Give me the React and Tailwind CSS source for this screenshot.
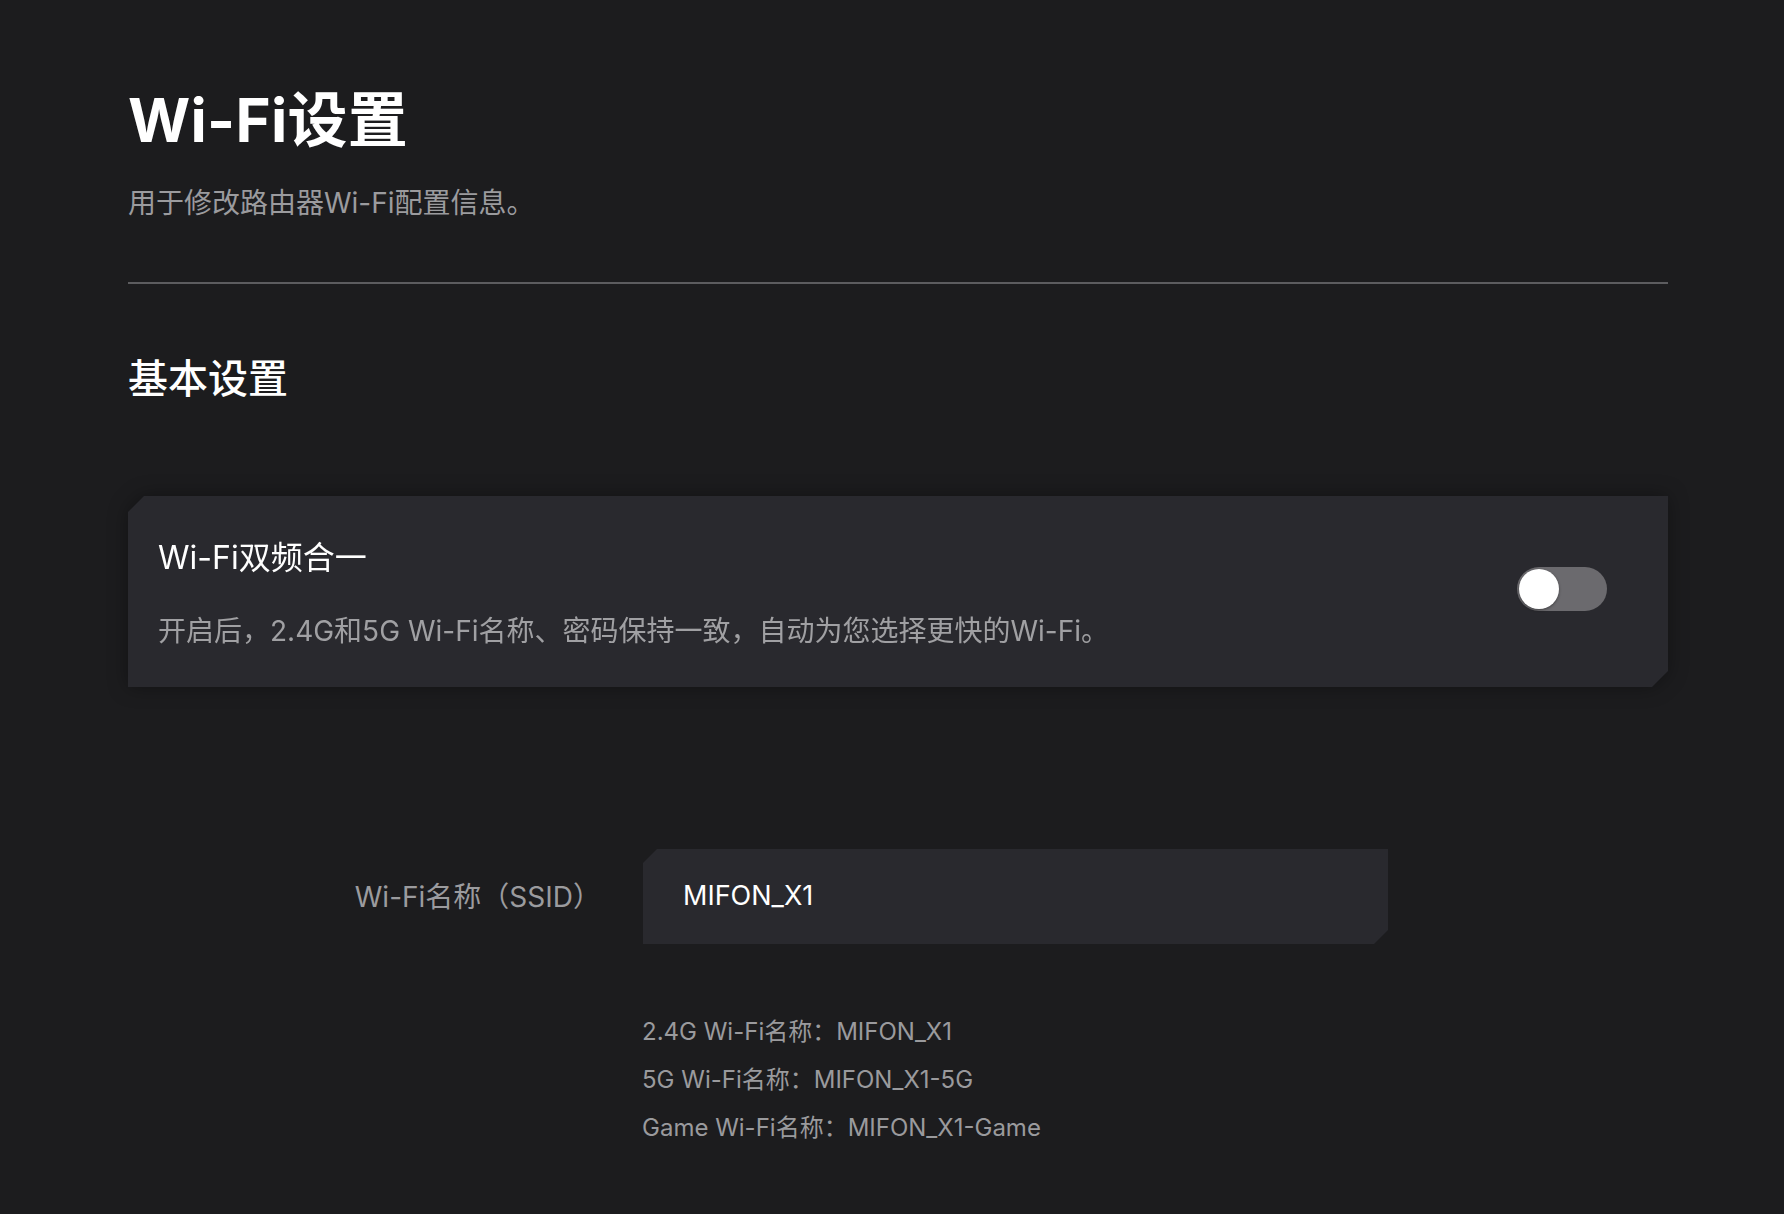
import React from "react";

export default function App() {
  const font = { fontFamily: '"Inter", "Noto Sans CJK SC", sans-serif' };
  return (
    <div className="min-h-[1214px] w-full bg-[#1c1c1e]" style={font}>
      <div className="ml-[128px] w-[1540px] pt-[90px] pb-[60px]">
        <h1 className="text-[60px] leading-none font-bold text-white tracking-[0.3px]">
          Wi-Fi设置
        </h1>
        <p className="mt-[39px] text-[28px] leading-[28px] text-[#9b9b9e]">
          用于修改路由器Wi-Fi配置信息。
        </p>
        <div className="mt-[65px] h-[2px] w-full bg-[#5c5c5f]" />

        <h2 className="mt-[75px] text-[40px] leading-[40px] font-medium text-white">
          基本设置
        </h2>

        <div className="mt-[97px] drop-shadow-[0_0_10px_rgba(0,0,0,0.35)]">
          <div className="flex h-[191px] items-center justify-between bg-[#29292e] pl-[30px] pr-[61px] [clip-path:polygon(16px_0,100%_0,100%_calc(100%_-_16px),calc(100%_-_16px)_100%,0_100%,0_16px)]">
            <div className="flex flex-col pt-[3px]">
              <div className="text-[32px] leading-[32px] text-white">Wi-Fi双频合一</div>
              <div className="mt-[43px] text-[28px] leading-[28px] text-[#a0a0a3]">
                开启后，2.4G和5G Wi-Fi名称、密码保持一致，自动为您选择更快的Wi-Fi。
              </div>
            </div>
            <button
              type="button"
              className="mb-[5px] flex h-[44px] w-[90px] items-center rounded-full bg-[#6b6a6e] p-[2px]"
            >
              <span className="h-[40px] w-[40px] rounded-full bg-white shadow-[0_1px_3px_rgba(0,0,0,0.4)]" />
            </button>
          </div>
        </div>

        <div className="mt-[162px] flex items-center">
          <div className="w-[515px] pr-[42px] text-right text-[28px] leading-[28px] text-[#9b9b9e]">
            Wi-Fi名称（SSID）
          </div>
          <div className="flex h-[95px] w-[745px] items-center bg-[#29292e] pl-[40px] text-[27px] text-white [clip-path:polygon(14px_0,100%_0,100%_calc(100%_-_14px),calc(100%_-_14px)_100%,0_100%,0_14px)]">
            MIFON_X1
          </div>
        </div>

        <div className="mt-[64px] ml-[514px] flex flex-col text-[24px] leading-[48px] text-[#9a9a9d]">
          <div>2.4G Wi-Fi名称：MIFON_X1</div>
          <div>5G Wi-Fi名称：MIFON_X1-5G</div>
          <div>Game Wi-Fi名称：MIFON_X1-Game</div>
        </div>
      </div>
    </div>
  );
}
